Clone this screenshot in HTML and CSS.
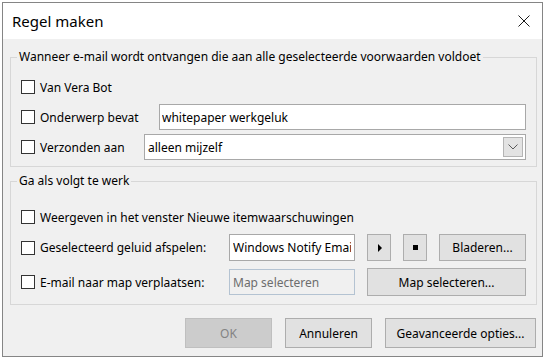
FILE: index.html
```html
<!DOCTYPE html>
<html>
	<head>
		<meta charset="UTF-8">
		<title>Regel maken</title>
		<link rel="stylesheet" href="styles.css">
	</head>
	<body>
		<div class="window">
			<div class="titlebar">
				<span class="title">Regel maken</span>
				<svg class="close" width="12" height="12" viewBox="0 0 12 12">
					<path d="M0.5 0.5 L11.5 11.5 M11.5 0.5 L0.5 11.5" stroke="#1a1a1a" stroke-width="1" fill="none"/>
				</svg>
			</div>
			<div class="body">
				<fieldset class="group cond">
					<legend>Wanneer e-mail wordt ontvangen die aan alle geselecteerde voorwaarden voldoet</legend>
					<div class="row r1">
						<label class="check"><span class="box"></span>Van Vera Bot</label>
					</div>
					<div class="row r1">
						<label class="check w-subject"><span class="box"></span>Onderwerp bevat</label>
						<input class="field grow" type="text" value="whitepaper werkgeluk" />
					</div>
					<div class="row r1">
						<label class="check w-to"><span class="box"></span>Verzonden aan</label>
						<div class="combo grow">
							<span>alleen mijzelf</span>
							<span class="drop">
								<svg width="10" height="6" viewBox="0 0 10 6"><path d="M0.5 0.5 L5 5 L9.5 0.5" stroke="#5a5a5a" stroke-width="1" fill="none"/></svg>
							</span>
						</div>
					</div>
				</fieldset>

				<fieldset class="group act">
					<legend>Ga als volgt te werk</legend>
					<div class="row a1">
						<label class="check"><span class="box"></span>Weergeven in het venster Nieuwe itemwaarschuwingen</label>
					</div>
					<div class="row a2">
						<label class="check w-act"><span class="box"></span>Geselecteerd geluid afspelen:</label>
						<input class="field sound" type="text" value="Windows Notify Email" />
						<button class="btn icon"><span class="play"></span></button>
						<button class="btn icon"><span class="stop"></span></button>
						<button class="btn browse">Bladeren...</button>
					</div>
					<div class="row a3">
						<label class="check w-act"><span class="box"></span>E-mail naar map verplaatsen:</label>
						<input class="field sound off" type="text" value="Map selecteren" disabled />
						<button class="btn folder">Map selecteren...</button>
					</div>
				</fieldset>

				<div class="actions">
					<button class="btn foot" disabled>OK</button>
					<button class="btn foot">Annuleren</button>
					<button class="btn foot wide">Geavanceerde opties...</button>
				</div>
			</div>
		</div>
	</body>
</html>
```

FILE: styles.css
```css
body{
	margin: 0;
	background-color: #fff;
	font-family: "Noto Sans", "Liberation Sans", sans-serif;
	font-size: 12px;
	color: #000;
}
.window{
	width: 541px;
	margin: 2px 0 0 2px;
	border: 1px solid #858585;
	box-sizing: border-box;
	background-color: #f0f0f0;
}
.titlebar{
	height: 36px;
	background-color: #fff;
	display: flex;
	align-items: center;
	padding: 0 12px 0 9px;
}
.title{
	flex: 1;
	font-size: 15px;
}
.body{
	padding: 10px 5px 8px 7px;
}
.group{
	margin: 0;
	border: 1px solid #d7d7d7;
	padding: 9px 10px 6px 10px;
	min-width: 0;
}
.group legend{
	line-height: 16px;
	padding: 0 2px;
	margin-left: -4px;
}
.act{
	margin-top: 6px;
	padding: 17px 10px 8px 10px;
}
.row{
	display: flex;
	align-items: center;
}
.r1{
	height: 26px;
}
.r1 + .r1{
	margin-top: 4px;
}
.a1{
	height: 22px;
}
.a2{
	height: 27px;
	margin-top: 6px;
}
.a3{
	height: 28px;
	margin-top: 7px;
}
.check{
	display: flex;
	align-items: center;
	white-space: nowrap;
}
.box{
	width: 14px;
	height: 14px;
	box-sizing: border-box;
	border: 1px solid #333;
	background-color: #fff;
	margin-right: 5px;
}
.w-subject{
	width: 138px;
}
.w-to{
	width: 123px;
}
.w-act{
	width: 208px;
}
.grow{
	flex: 1;
}
.field{
	height: 26px;
	box-sizing: border-box;
	border: 1px solid #a8a8a8;
	background-color: #fff;
	font: inherit;
	color: #000;
	padding: 0 2px;
	margin: 0;
	outline: none;
}
.sound{
	width: 126px;
	height: 27px;
	flex: none;
	padding: 0 3px;
}
.off{
	height: 26px;
	border-color: #b4c3d2;
	background-color: #f0f0f0;
	color: #6d6d6d;
	-webkit-text-fill-color: #6d6d6d;
	opacity: 1;
}
.combo{
	height: 26px;
	box-sizing: border-box;
	border: 1px solid #a8a8a8;
	background-color: #fff;
	display: flex;
	align-items: center;
	justify-content: space-between;
	padding: 0 2px 0 3px;
}
.drop{
	width: 20px;
	height: 20px;
	box-sizing: border-box;
	border: 1px solid #b5b5b5;
	background-color: #e3e3e3;
	display: flex;
	align-items: center;
	justify-content: center;
}
.btn{
	font: inherit;
	color: #000;
	background-color: #e1e1e1;
	border: 1px solid #adadad;
	box-sizing: border-box;
	margin: 0;
	padding: 0;
	display: flex;
	align-items: center;
	justify-content: center;
}
.icon{
	width: 24px;
	height: 27px;
	margin-left: 12px;
}
.icon + .icon{
	margin-left: 12px;
}
.play{
	width: 0;
	height: 0;
	border-top: 4px solid transparent;
	border-bottom: 4px solid transparent;
	border-left: 4px solid #000;
	margin-left: 2px;
}
.stop{
	width: 5px;
	height: 5px;
	background-color: #000;
}
.browse{
	width: 87px;
	height: 27px;
	margin-left: 12px;
}
.folder{
	width: 159px;
	height: 28px;
	margin-left: 12px;
}
.actions{
	display: flex;
	justify-content: flex-end;
	gap: 13px;
	margin-top: 13px;
	padding-right: 1px;
}
.foot{
	width: 87px;
	height: 30px;
}
.foot.wide{
	width: 151px;
}
.foot:disabled{
	background-color: #cccccc;
	border-color: #bfbfbf;
	color: #838383;
}
```
